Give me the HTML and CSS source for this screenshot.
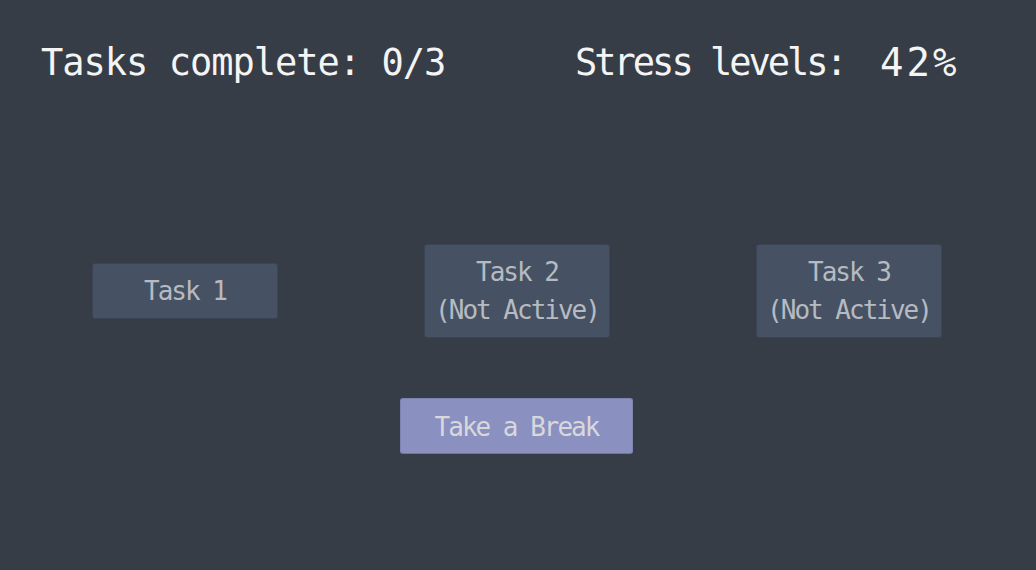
FILE: index.html
```html
<!DOCTYPE html>
<html>
<head>
<meta charset="utf-8">
<link rel="stylesheet" href="styles.css">
</head>
<body>
<main class="screen">
  <header class="hud">
    <div class="hud-item tasks">Tasks complete: 0/3</div>
    <div class="hud-item stress"><span class="stress-label">Stress levels:</span><span class="stress-value">42%</span></div>
  </header>
  <section class="task-row">
    <button class="btn task">Task 1</button>
    <button class="btn task">Task 2<br>(Not Active)</button>
    <button class="btn task">Task 3<br>(Not Active)</button>
  </section>
  <section class="break-row">
    <button class="btn break">Take a Break</button>
  </section>
</main>
</body>
</html>
```
FILE: styles.css
```css
html, body {
  margin: 0;
  padding: 0;
  background: #363d47;
}
.screen {
  width: 1036px;
  height: 570px;
  overflow: hidden;
  font-family: "DejaVu Sans Mono", "Liberation Mono", monospace;
}
.hud {
  display: flex;
  padding: 44px 0 0 41px;
}
.hud-item {
  font-size: 37px;
  line-height: 37px;
  letter-spacing: -1px;
  color: #f4f4f4;
  white-space: pre;
}
.tasks {
  width: 534px;
}
.stress {
  display: flex;
}
.stress-label {
  letter-spacing: -3px;
  width: 305px;
}
.stress-value {
  font-size: 39px;
  letter-spacing: 3px;
}
.task-row {
  display: flex;
  align-items: center;
  gap: 146px;
  margin-top: 164px;
  padding-left: 92px;
  height: 91px;
}
.btn {
  font-family: "DejaVu Sans Mono", "Liberation Mono", monospace;
  font-size: 26px;
  line-height: 38px;
  letter-spacing: -2px;
  border-radius: 3px;
  box-sizing: border-box;
  padding: 8px 0;
  text-align: center;
  margin: 0;
}
.task {
  width: 186px;
  background: #465263;
  border: 1px solid #3b4452;
  color: #b6bac1;
}
.break-row {
  display: flex;
  margin-top: 62px;
  padding-left: 400px;
}
.break {
  width: 233px;
  height: 56px;
  padding: 9px 0;
  background: #8a90c0;
  border: 1px solid #7e84b2;
  border-bottom: 1px solid #6f74a0;
  color: #d8d8dc;
}
```
